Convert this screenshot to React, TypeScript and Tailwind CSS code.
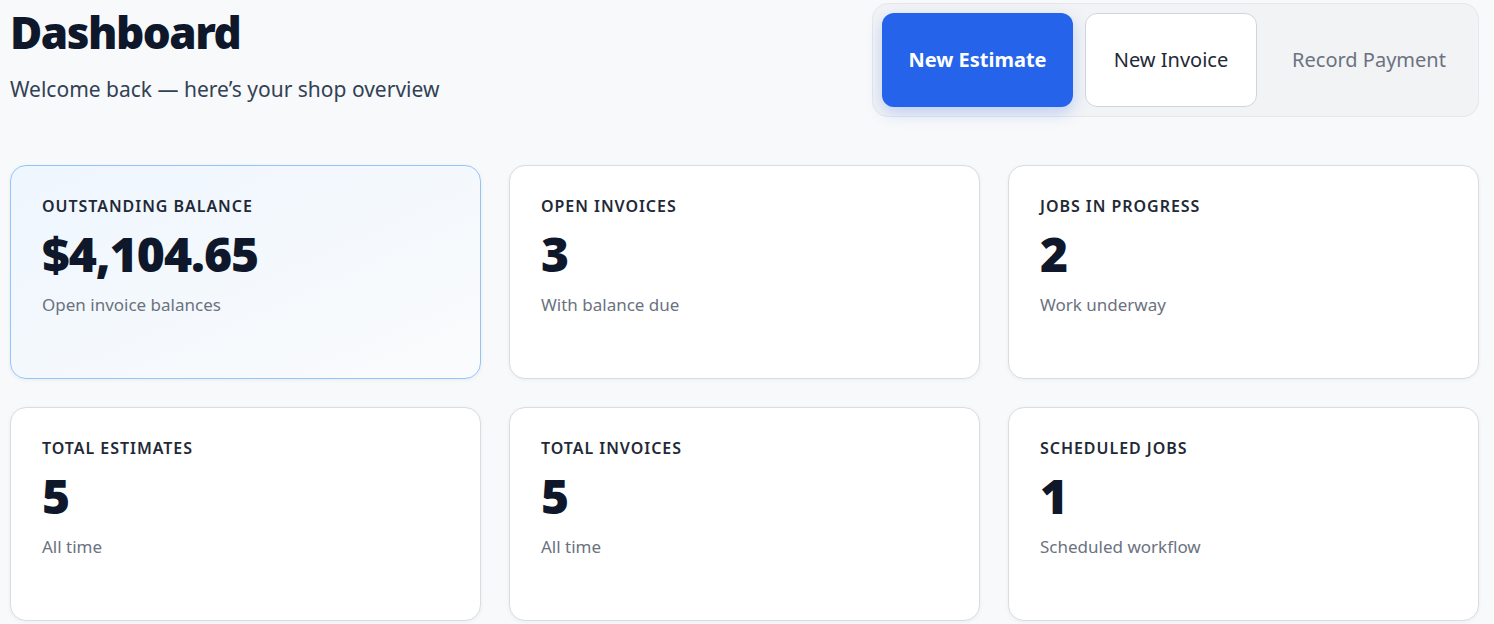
import React from "react";

const cards = [
  { label: "OUTSTANDING BALANCE", value: "$4,104.65", sub: "Open invoice balances", hi: true },
  { label: "OPEN INVOICES", value: "3", sub: "With balance due" },
  { label: "JOBS IN PROGRESS", value: "2", sub: "Work underway" },
  { label: "TOTAL ESTIMATES", value: "5", sub: "All time" },
  { label: "TOTAL INVOICES", value: "5", sub: "All time" },
  { label: "SCHEDULED JOBS", value: "1", sub: "Scheduled workflow" },
];

export default function App() {
  return (
    <div className="min-h-[624px] bg-[#f8f9fa] pl-[10px] pr-[15px] overflow-hidden" style={{ fontFamily: '"Noto Sans", sans-serif' }}>
      <div className="flex justify-between h-[165px]">
        <div>
          <h1 className="text-[44px] font-black text-[#0f172a] leading-none mt-[10px] tracking-[-1.5px]">Dashboard</h1>
          <p className="text-[21px] text-[#334155] mt-[20px]">Welcome back — here’s your shop overview</p>
        </div>
        <div className="mt-[3px] h-[114px] w-[607px] rounded-[16px] bg-[#f2f3f5] border border-[#e5e7eb] flex items-center gap-[12px] px-[9px]">
          <button className="h-[94px] w-[191px] rounded-[12px] bg-[#2563eb] text-white text-[20px] font-bold shadow-[0_6px_16px_rgba(37,99,235,0.25)]">New Estimate</button>
          <button className="h-[94px] w-[172px] rounded-[12px] bg-white border border-[#d1d5db] text-[#1f2937] text-[20px]">New Invoice</button>
          <button className="h-[94px] flex-1 text-[#6b7280] text-[20px]">Record Payment</button>
        </div>
      </div>
      <div className="grid grid-cols-3 gap-x-[28px] gap-y-[28px]">
        {cards.map((c) => (
          <div
            key={c.label}
            className={`h-[214px] rounded-[16px] border px-[31px] pt-[28px] ${
              c.hi
                ? "border-[#93c5fd] bg-gradient-to-br from-[#eef6fe] to-[#fafbfc] shadow-[0_1px_4px_rgba(0,0,0,0.06)]"
                : "border-[#d9dce1] bg-white shadow-[0_1px_4px_rgba(0,0,0,0.05)]"
            }`}
          >
            <div className="text-[16px] font-semibold tracking-[0.06em] text-[#1f2937]">{c.label}</div>
            <div className="text-[48px] font-black text-[#0f172a] leading-none mt-[12px] tracking-[-1px]">{c.value}</div>
            <div className="text-[17px] text-[#6b7280] mt-[14px]">{c.sub}</div>
          </div>
        ))}
      </div>
    </div>
  );
}
